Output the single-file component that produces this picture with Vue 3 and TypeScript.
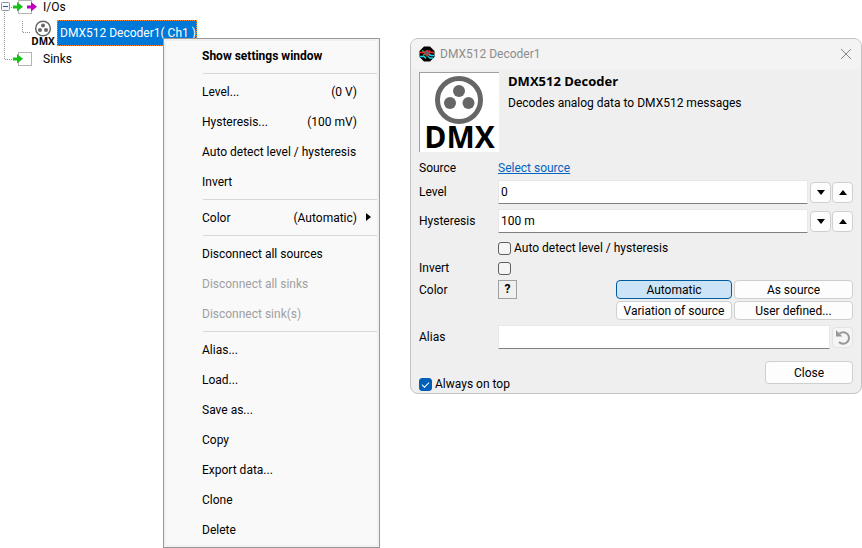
<script setup lang="ts">
import { ref } from 'vue'

interface MenuItem {
  label: string
  value?: string
  bold?: boolean
  disabled?: boolean
  submenu?: boolean
}

const menuGroups: MenuItem[][] = [
  [{ label: 'Show settings window', bold: true }],
  [
    { label: 'Level...', value: '(0 V)' },
    { label: 'Hysteresis...', value: '(100 mV)' },
    { label: 'Auto detect level / hysteresis' },
    { label: 'Invert' },
  ],
  [{ label: 'Color', value: '(Automatic)', submenu: true }],
  [
    { label: 'Disconnect all sources' },
    { label: 'Disconnect all sinks', disabled: true },
    { label: 'Disconnect sink(s)', disabled: true },
  ],
  [
    { label: 'Alias...' },
    { label: 'Load...' },
    { label: 'Save as...' },
    { label: 'Copy' },
    { label: 'Export data...' },
    { label: 'Clone' },
    { label: 'Delete' },
  ],
]

const level = ref('0')
const hysteresis = ref('100 m')
const autoDetect = ref(false)
const invert = ref(false)
const alias = ref('')
const alwaysOnTop = ref(true)
const colorModes = ['Automatic', 'As source', 'Variation of source', 'User defined...']
const colorMode = ref('Automatic')
</script>

<template>
  <main class="workspace">
    <section class="tree">
      <svg class="tree-lines" width="40" height="66" aria-hidden="true">
        <path d="M4.5 12V59M5 7.500H14M5 59.500H14M22.500 21V33M23 32.500H31" />
      </svg>
      <div class="node">
        <svg class="node-icon" width="40" height="14" aria-hidden="true">
          <rect x="1.500" y="2.500" width="8" height="8" rx="1" fill="#f6f8fb" stroke="#8a94a0" />
          <path d="M3 6.500H8" stroke="#2b579a" />
          <rect x="18.500" y="0.500" width="13" height="13" fill="#fff" stroke="#b4b4b4" />
          <path d="M13 5.500H17V2L23 6.800 17 11.500V8.500H13Z" fill="#12c312" />
          <path d="M27 5.500H31V2L37 6.800 31 11.500V8.500H27Z" fill="#c000c0" />
        </svg>
        <span>I/Os</span>
      </div>
      <div class="node child">
        <svg class="node-icon" width="57" height="26" aria-hidden="true">
          <circle cx="43" cy="8.500" r="7.300" fill="#fff" stroke="#666" stroke-width="1.500" />
          <g fill="#666"><circle cx="43" cy="5.500" r="2" /><circle cx="40" cy="10" r="2" /><circle cx="46" cy="10" r="2" /></g>
          <text x="43" y="25" text-anchor="middle" class="logo-text" font-size="10">DMX</text>
        </svg>
        <span class="selected">DMX512 Decoder1( Ch1 )</span>
      </div>
      <div class="node">
        <svg class="node-icon" width="40" height="14" aria-hidden="true">
          <rect x="18.500" y="0.500" width="13" height="13" fill="#fff" stroke="#b4b4b4" />
          <path d="M13 5.500H17V2L23 6.800 17 11.500V8.500H13Z" fill="#12c312" />
        </svg>
        <span>Sinks</span>
      </div>
    </section>

    <nav class="menu">
      <div v-for="(group, g) in menuGroups" :key="g" class="group">
        <button
          v-for="item in group"
          :key="item.label"
          type="button"
          class="item"
          :class="{ bold: item.bold }"
          :disabled="item.disabled"
        >
          <span>{{ item.label }}</span>
          <span v-if="item.value">{{ item.value }}</span>
          <svg v-if="item.submenu" class="sub-arrow" width="5" height="8" aria-hidden="true"><path d="M0 0L5 4L0 8Z" /></svg>
        </button>
      </div>
    </nav>

    <section class="dialog">
      <header class="titlebar">
        <svg width="16" height="16" viewBox="0 0 16 16" aria-hidden="true">
          <path d="M5 0.500H11L15.500 5V11L11 15.500H5L0.500 11V5Z" fill="#000" />
          <g fill="none" stroke-width="1">
            <path d="M4 9.500L6.500 7.500M3 4.500L6 6.500L8.500 10.500" stroke="#18c060" stroke-width="1.500" />
            <circle cx="8" cy="7" r="2.500" fill="#606468" stroke="#e03030" />
            <path d="M1 6.500H5M10 4.500L12 6.500H15" stroke="#ff2020" stroke-width="1.500" />
            <path d="M1 10.500H5L7 12.500M10 8.500L12 9.500H15M9 10.500L11 12H14" stroke="#20d0e8" stroke-width="1.500" />
          </g>
        </svg>
        <span class="title">DMX512 Decoder1</span>
        <button type="button" class="dismiss" aria-label="Close window">
          <svg width="12" height="12" aria-hidden="true"><path d="M1 1L11 11M11 1L1 11" /></svg>
        </button>
      </header>

      <div class="content">
        <div class="intro">
          <div class="logo">
            <svg width="79" height="79" viewBox="0 0 79 79" aria-hidden="true">
              <circle cx="39" cy="27" r="21.500" fill="none" stroke="#666" stroke-width="5" />
              <g fill="#666"><circle cx="39" cy="18" r="6" /><circle cx="30" cy="30" r="6" /><circle cx="48.500" cy="30" r="6" /></g>
              <text x="39.500" y="75" text-anchor="middle" class="logo-text" font-size="30">DMX</text>
            </svg>
          </div>
          <div class="about">
            <h1>DMX512 Decoder</h1>
            <p>Decodes analog data to DMX512 messages</p>
          </div>
        </div>

        <div class="row">
          <span class="label">Source</span>
          <a href="#">Select source</a>
        </div>
        <div class="row tall">
          <label class="label" for="level">Level</label>
          <div class="field">
            <input id="level" v-model="level" type="text" />
            <button type="button" class="step" aria-label="Decrease level"><svg width="8" height="5"><path d="M0 0H8L4 5Z" /></svg></button>
            <button type="button" class="step" aria-label="Increase level"><svg width="8" height="5"><path d="M0 5H8L4 0Z" /></svg></button>
          </div>
        </div>
        <div class="row tall">
          <label class="label" for="hysteresis">Hysteresis</label>
          <div class="field">
            <input id="hysteresis" v-model="hysteresis" type="text" />
            <button type="button" class="step" aria-label="Decrease hysteresis"><svg width="8" height="5"><path d="M0 0H8L4 5Z" /></svg></button>
            <button type="button" class="step" aria-label="Increase hysteresis"><svg width="8" height="5"><path d="M0 5H8L4 0Z" /></svg></button>
          </div>
        </div>
        <div class="row">
          <span class="label"></span>
          <label class="check"><input v-model="autoDetect" type="checkbox" />Auto detect level / hysteresis</label>
        </div>
        <div class="row">
          <label class="label" for="invert">Invert</label>
          <input id="invert" v-model="invert" type="checkbox" />
        </div>
        <div class="row colors">
          <span class="label">Color</span>
          <button type="button" class="help" aria-label="Color help">?</button>
          <div class="modes">
            <button
              v-for="mode in colorModes"
              :key="mode"
              type="button"
              class="push"
              :class="{ active: mode === colorMode }"
              @click="colorMode = mode"
            >{{ mode }}</button>
          </div>
        </div>
        <div class="row tall">
          <label class="label" for="alias">Alias</label>
          <div class="field">
            <input id="alias" v-model="alias" type="text" />
            <button type="button" class="step undo" aria-label="Reset alias">
              <svg width="16" height="16">
                <path d="M4.500 4.500A5.800 5.800 0 1 1 4 13" />
                <path class="head" d="M1 1L7.500 7.500H1Z" />
              </svg>
            </button>
          </div>
        </div>
        <footer class="footer">
          <label class="check"><input v-model="alwaysOnTop" type="checkbox" />Always on top</label>
          <button type="button" class="push close">Close</button>
        </footer>
      </div>
    </section>
  </main>
</template>

<style>
body {
  background: #fff;
}
</style>

<style scoped>
* {
  box-sizing: border-box;
}
.workspace {
  position: relative;
  display: grid;
  grid-template-columns: 410px minmax(0, 1fr);
  align-items: start;
  min-height: 100vh;
  font: 12px/16px Roboto, "Open Sans", sans-serif;
  color: #000;
}
button,
input {
  font: inherit;
  color: inherit;
  margin: 0;
}
.tree {
  position: relative;
  display: flex;
  flex-direction: column;
  gap: 6px;
}
.tree-lines {
  position: absolute;
  left: 0;
  top: 0;
  fill: none;
  stroke: #909090;
  stroke-dasharray: 1 1;
}
.node {
  position: relative;
  display: flex;
  align-items: center;
  gap: 3px;
  height: 14px;
  line-height: 14px;
  white-space: nowrap;
}
.node.child {
  gap: 0;
  height: 26px;
}
.node-icon {
  flex: none;
  overflow: visible;
}
.selected {
  width: 140px;
  height: 26px;
  padding: 0 2px;
  border: 1px dotted #ff8728;
  background: #0078d7;
  color: #fff;
  line-height: 24px;
}
.logo-text {
  font-family: "Open Sans", "Noto Sans", sans-serif;
  font-weight: 700;
}
.menu {
  position: absolute;
  left: 163px;
  top: 38px;
  width: 217px;
  padding: 2px;
  border: 1px solid #999;
  background: #f9f9f9;
  box-shadow: inset 0 0 0 2px #f0f0f0;
}
.group + .group::before {
  content: "";
  display: block;
  height: 1px;
  margin: 2px 0 3px 37px;
  background: #d7d7d7;
}
.item {
  display: flex;
  align-items: center;
  justify-content: space-between;
  position: relative;
  width: 100%;
  height: 30px;
  padding: 0 20px 0 36px;
  border: 0;
  background: none;
  text-align: left;
  white-space: nowrap;
}
.item.bold {
  font-weight: 700;
}
.item:disabled {
  color: #a0a0a0;
}
.sub-arrow {
  position: absolute;
  right: 6px;
  top: 10px;
}
.dialog {
  margin-top: 38px;
  border: 1px solid #c3c3c3;
  border-radius: 8px;
  background: #efefef;
  overflow: hidden;
}
.titlebar {
  display: flex;
  align-items: center;
  gap: 5px;
  height: 30px;
  padding: 0 9px 0 8px;
  background: #f3f3f3;
  color: #8c8c8c;
}
.title {
  flex: 1;
}
.dismiss {
  display: flex;
  padding: 0;
  border: 0;
  background: none;
}
.dismiss svg {
  fill: none;
  stroke: #868686;
}
.content {
  padding: 3px 8px 1px;
}
.intro {
  display: flex;
  gap: 9px;
  margin-bottom: 6px;
}
.logo {
  width: 80px;
  height: 80px;
  border-top: 1px solid #a0a0a0;
  border-left: 1px solid #a0a0a0;
  background: #fff;
}
.logo svg {
  display: block;
  overflow: visible;
}
h1 {
  margin: 1px 0 6px;
  font-family: "Open Sans", "Noto Sans", sans-serif;
  font-size: 13px;
  line-height: 16px;
}
p {
  margin: 0;
}
.row {
  display: flex;
  align-items: center;
  min-height: 20px;
}
.row.tall {
  height: 24px;
  margin: 2px 0 5px;
}
.row.tall + .row.tall {
  margin-top: 0;
}
.label {
  flex: none;
  width: 79px;
}
a {
  color: #0563c1;
}
.field {
  display: flex;
  flex: 1;
  align-items: center;
  gap: 1px;
  min-width: 0;
}
input[type="text"] {
  flex: 1;
  min-width: 0;
  height: 24px;
  margin-right: 1px;
  padding: 0 2px;
  border: 1px solid #e8e8e8;
  border-bottom-color: #808080;
  border-radius: 1px;
  background: #fff;
  outline: 0;
}
.step {
  display: flex;
  align-items: center;
  justify-content: center;
  width: 21px;
  height: 21px;
  padding: 0;
  border: 1px solid #cfcfcf;
  border-radius: 4px;
  background: #fdfdfd;
}
.undo {
  border-color: #e3e3e3;
  background: #f5f5f5;
}
.undo svg {
  fill: none;
  stroke: #999;
  stroke-width: 2;
}
.undo .head {
  fill: #999;
  stroke: none;
}
.check {
  display: flex;
  align-items: center;
  gap: 3px;
}
input[type="checkbox"] {
  appearance: none;
  display: block;
  width: 13px;
  height: 13px;
  border: 1px solid #606060;
  border-radius: 3px;
  background: #f5f5f5;
}
input[type="checkbox"]:checked {
  border-color: #005fb8;
  background: #005fb8;
}
input[type="checkbox"]:checked::before {
  content: "";
  display: block;
  width: 6px;
  height: 3px;
  margin: 3px 0 0 2px;
  border: solid #fff;
  border-width: 0 0 1px 1px;
  transform: rotate(-45deg);
}
.row.colors {
  align-items: flex-start;
  padding-top: 2px;
  line-height: 20px;
}
.help {
  width: 19px;
  height: 19px;
  padding: 0;
  border: 1px solid #a0a0a0;
  background: #f0f0f0;
  font-weight: 700;
  line-height: 17px;
}
.modes {
  display: grid;
  grid-template-columns: 116px 119px;
  gap: 2px;
  margin-left: auto;
}
.push {
  height: 19px;
  padding: 0;
  border: 1px solid #cfcfcf;
  border-radius: 4px;
  background: #fdfdfd;
  line-height: 16px;
}
.push.active {
  border-color: #005a9e;
  background: #cce4f7;
}
.row.colors + .row.tall {
  margin-top: 5px;
}
.footer {
  display: flex;
  align-items: flex-end;
  justify-content: space-between;
  margin-top: 12px;
}
.close {
  width: 88px;
  height: 23px;
  margin-bottom: 8px;
}
</style>
